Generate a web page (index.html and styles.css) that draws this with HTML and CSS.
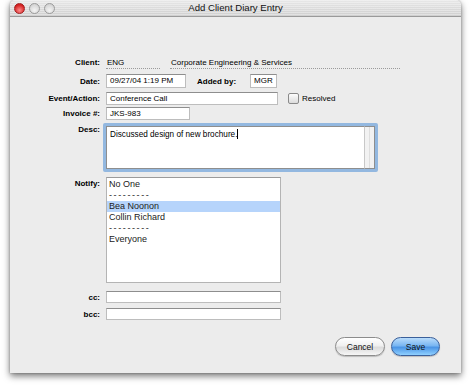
FILE: index.html
```html
<!DOCTYPE html>
<html lang="en">
<head>
    <meta charset="UTF-8">
    <title>Add Client Diary Entry</title>
    <link rel="stylesheet" href="styles.css">
</head>
<body>
    <div class="window">
        <div class="titlebar">
            <div class="lights">
                <span class="light close"></span>
                <span class="light"></span>
                <span class="light"></span>
            </div>
            <div class="title">Add Client Diary Entry</div>
        </div>

        <div class="form">
            <div class="row row-client">
                <label>Client:</label>
                <span class="static code">ENG</span>
                <span class="static name">Corporate Engineering &amp; Services</span>
            </div>

            <div class="row row-date">
                <label>Date:</label>
                <div class="field date">09/27/04 1:19 PM</div>
                <span class="inline-label">Added by:</span>
                <div class="field who">MGR</div>
            </div>

            <div class="row row-event">
                <label>Event/Action:</label>
                <div class="field event">Conference Call</div>
                <span class="checkbox"></span>
                <span class="check-text">Resolved</span>
            </div>

            <div class="row row-invoice">
                <label>Invoice #:</label>
                <div class="field invoice">JKS-983</div>
            </div>

            <div class="row row-desc">
                <label>Desc:</label>
                <div class="textarea">
                    <div class="textarea-text">Discussed design of new brochure.<span class="caret"></span></div>
                    <div class="track"></div>
                </div>
            </div>

            <div class="row row-notify">
                <label>Notify:</label>
                <ul class="listbox">
                    <li>No One</li>
                    <li class="sep">---------</li>
                    <li class="selected">Bea Noonon</li>
                    <li>Collin Richard</li>
                    <li class="sep">---------</li>
                    <li>Everyone</li>
                </ul>
            </div>

            <div class="row row-cc">
                <label>cc:</label>
                <div class="field wide"></div>
            </div>

            <div class="row row-bcc">
                <label>bcc:</label>
                <div class="field wide"></div>
            </div>
        </div>

        <div class="buttons">
            <button class="btn">Cancel</button>
            <button class="btn default">Save</button>
        </div>
    </div>
</body>
</html>
```

FILE: styles.css
```css
html, body {
    margin: 0;
    padding: 0;
    width: 470px;
    height: 390px;
    background: #fff;
    font-family: "Liberation Sans", Arial, sans-serif;
    color: #000;
    overflow: hidden;
}

.window {
    margin-left: 10px;
    width: 451px;
    height: 373px;
    background: #ececec;
    border-radius: 5px 5px 0 0;
    box-shadow: 0 3px 7px rgba(0, 0, 0, 0.55), 0 0 2px rgba(0, 0, 0, 0.3);
    position: relative;
}

.titlebar {
    height: 16px;
    border-bottom: 1px solid #9a9a9a;
    border-radius: 5px 5px 0 0;
    background:
        repeating-linear-gradient(to bottom, rgba(255, 255, 255, 0.35) 0, rgba(255, 255, 255, 0.35) 1px, transparent 1px, transparent 2px),
        linear-gradient(to bottom, #e8e8e8, #cfcfcf);
    display: flex;
    align-items: center;
    position: relative;
}

.lights {
    display: flex;
    gap: 4px;
    margin-left: 4px;
}

.light {
    width: 9px;
    height: 9px;
    border-radius: 50%;
    border: 1px solid #9b9b9b;
    background: radial-gradient(circle at 50% 70%, #f4f4f4, #c9c9c9);
}

.light.close {
    border-color: #a02020;
    background: radial-gradient(circle at 50% 70%, #ff8c8c, #d42020 70%);
}

.title {
    position: absolute;
    left: 0;
    right: 0;
    top: 0;
    line-height: 16px;
    text-align: center;
    font-size: 9.6px;
    color: #111;
}

.form {
    padding-top: 39px;
}

.row {
    display: flex;
    align-items: center;
    font-size: 8px;
}

.row label {
    width: 90px;
    margin-right: 6px;
    text-align: right;
    font-weight: bold;
    flex-shrink: 0;
}

.field {
    background: #fff;
    border: 1px solid #bdbdbd;
    border-top-color: #8e8e8e;
    box-sizing: border-box;
    padding-left: 3px;
    line-height: 12px;
}

.row-client {
    height: 13px;
}

.static {
    border-bottom: 1px dotted #9a9a9a;
    height: 11px;
    line-height: 11px;
    padding-left: 1px;
}

.static.code {
    width: 53px;
}

.static.name {
    width: 229px;
    margin-left: 10px;
}

.row-date {
    margin-top: 5px;
    height: 14px;
}

.field.date {
    width: 80px;
    height: 14px;
}

.inline-label {
    font-weight: bold;
    margin-left: 11px;
    margin-right: 14px;
}

.field.who {
    width: 27px;
    height: 14px;
}

.row-event {
    margin-top: 4px;
    height: 13px;
}

.field.event {
    width: 172px;
    height: 13px;
}

.checkbox {
    width: 9px;
    height: 9px;
    margin-left: 10px;
    border: 1px solid #8a8a8a;
    border-radius: 2px;
    background: linear-gradient(to bottom, #fdfdfd, #dcdcdc);
}

.check-text {
    margin-left: 3px;
}

.row-invoice {
    margin-top: 2px;
    height: 13px;
}

.field.invoice {
    width: 84px;
    height: 13px;
}

.row-desc {
    margin-top: 3px;
    align-items: flex-start;
}

.row-desc label,
.row-notify label {
    padding-top: 2px;
}

.textarea {
    margin-left: -3px;
    width: 275px;
    height: 49px;
    box-sizing: border-box;
    border: 3px solid #93b8e0;
    border-radius: 2px;
    display: flex;
    background: #fff;
}

.textarea-text {
    flex: 1;
    border: 1px solid #8e8e8e;
    border-right: none;
    padding: 2px 3px;
    font-size: 8.2px;
    line-height: 10px;
}

.caret {
    display: inline-block;
    width: 1px;
    height: 10px;
    background: #000;
    vertical-align: -2px;
}

.track {
    width: 11px;
    background: #f2f2f2;
    border-left: 1px solid #c8c8c8;
    border-right: 1px solid #8e8e8e;
    border-top: 1px solid #8e8e8e;
    border-bottom: 1px solid #8e8e8e;
    box-sizing: border-box;
    background-image: linear-gradient(to right, transparent 4px, #dedede 4px, #dedede 5px, transparent 5px);
}

.row-notify {
    margin-top: 5px;
    align-items: flex-start;
}

.listbox {
    list-style: none;
    margin: 0;
    padding: 1px 0 0;
    width: 175px;
    height: 106px;
    box-sizing: border-box;
    background: #fff;
    border: 1px solid #b4b4b4;
    border-top-color: #9a9a9a;
    font-size: 9px;
    color: #222;
}

.listbox li {
    height: 11px;
    line-height: 11px;
    padding-left: 2px;
}

.listbox li.sep {
    letter-spacing: 1.6px;
}

.listbox li.selected {
    background: #b6d4fb;
}

.row-cc {
    margin-top: 8px;
    height: 12px;
}

.row-bcc {
    margin-top: 5px;
    height: 12px;
}

.field.wide {
    width: 175px;
    height: 12px;
}

.buttons {
    display: flex;
    justify-content: flex-end;
    gap: 6px;
    margin-top: 17px;
    padding-right: 21px;
}

.btn {
    height: 19px;
    width: 50px;
    border-radius: 10px;
    border: 1px solid #8c8c8c;
    background: linear-gradient(to bottom, #ffffff 0%, #f0f0f0 45%, #dcdcdc 55%, #f6f6f6 100%);
    font-family: "Liberation Sans", Arial, sans-serif;
    font-size: 8.5px;
    color: #111;
    padding: 0;
    box-shadow: 0 1px 1px rgba(0, 0, 0, 0.2);
}

.btn.default {
    width: 49px;
    border-color: #3a5f9a;
    background: linear-gradient(to bottom, #b9dcfb 0%, #79b6f2 45%, #4b95e6 55%, #8fd0ff 100%);
}
```
